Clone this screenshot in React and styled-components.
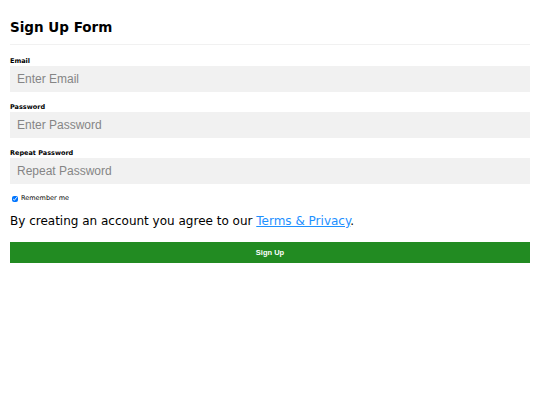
import React from 'react'
import styled, { createGlobalStyle } from 'styled-components'

const GlobalStyle = createGlobalStyle`
  body {
    margin: 0;
    background: #fff;
    font-family: "DejaVu Sans", Verdana, sans-serif;
  }
`

const Form = styled.form`
  display: flex;
  flex-direction: column;
  padding: 0 10px;
  width: 520px;
`

const Title = styled.h1`
  margin: 19px 0 0;
  font-size: 13.5px;
  line-height: 17px;
  font-weight: 700;
  color: #000;
`

const Divider = styled.hr`
  width: 100%;
  margin: 8px 0 0;
  border: 0;
  border-top: 1px solid #f1f1f1;
`

const Label = styled.label`
  display: block;
  margin-top: ${(p) => p.top || '11px'};
  font-size: 6.5px;
  line-height: 9px;
  font-weight: 700;
  color: #000;
`

const Input = styled.input`
  box-sizing: border-box;
  width: 100%;
  height: 26px;
  margin-top: 0;
  padding: 0 7px;
  border: 0;
  background: #f1f1f1;
  font-family: "Liberation Sans", Arial, sans-serif;
  font-size: 12px;
  color: #000;
  outline: none;

  &::placeholder {
    color: #858585;
  }
`

const CheckRow = styled.label`
  display: flex;
  align-items: center;
  gap: 3px;
  margin-top: 10px;
  font-size: 6.5px;
  line-height: 9px;
  color: #000;

  input {
    width: 6px;
    height: 6px;
    margin: 0 0 0 2px;
  }
`

const Terms = styled.p`
  margin: 10px 0 0;
  font-size: 12px;
  line-height: 16px;
  color: #000;

  a {
    color: dodgerblue;
  }
`

const SubmitButton = styled.button`
  width: 100%;
  height: 21px;
  margin-top: 13px;
  border: 0;
  padding: 0;
  background: #228b22;
  color: #fff;
  font-family: "Liberation Sans", Arial, sans-serif;
  font-size: 7.5px;
  font-weight: 700;
  cursor: pointer;
`

const App = () => {
  return (
    <>
      <GlobalStyle />
      <Form onSubmit={(e) => e.preventDefault()}>
        <Title>Sign Up Form</Title>
        <Divider />

        <Label htmlFor="email" top="12px">Email</Label>
        <Input id="email" type="text" placeholder="Enter Email" />

        <Label htmlFor="psw">Password</Label>
        <Input id="psw" type="password" placeholder="Enter Password" />

        <Label htmlFor="psw-repeat">Repeat Password</Label>
        <Input id="psw-repeat" type="password" placeholder="Repeat Password" />

        <CheckRow>
          <input type="checkbox" defaultChecked />
          Remember me
        </CheckRow>

        <Terms>
          By creating an account you agree to our <a href="#">Terms &amp; Privacy</a>.
        </Terms>

        <SubmitButton type="submit">Sign Up</SubmitButton>
      </Form>
    </>
  )
}

export default App
